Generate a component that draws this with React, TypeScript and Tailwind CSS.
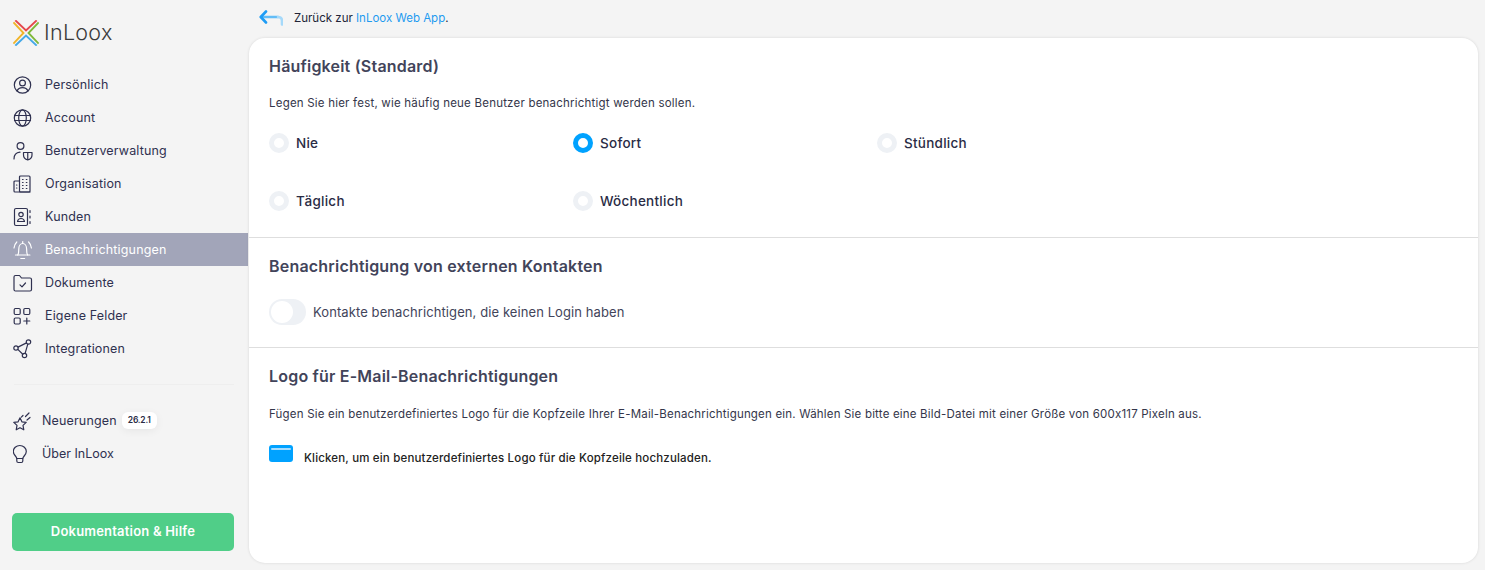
import React from "react";

const S = (p: { children: React.ReactNode }) => (
  <svg viewBox="0 0 20 20" fill="none" stroke="currentColor" strokeWidth="1.2" strokeLinecap="round" strokeLinejoin="round" className="w-[20px] h-[20px] shrink-0">
    {p.children}
  </svg>
);

const icons: Record<string, React.ReactNode> = {
  user: (<><circle cx="9.5" cy="10" r="8.2" /><circle cx="9.5" cy="8" r="2.9" /><path d="M4.1 16c.9-2.4 3-3.3 5.4-3.3s4.5.9 5.4 3.3" /></>),
  globe: (<><circle cx="9.5" cy="10" r="8.2" /><ellipse cx="9.5" cy="10" rx="3.8" ry="8.2" /><path d="M1.5 7.5h16M1.5 12.5h16" /></>),
  users: (<><circle cx="7.5" cy="5" r="3.4" /><path d="M1 18c0-4 2.5-6.500 6-6.800" /><path d="M10.500 11.500h8.500v2.500c0 2.500-2 4.300-4.250 4.800-2.250-.5-4.250-2.300-4.250-4.800z" /><path d="M14.750 11.500v7" /></>),
  org: (<><rect x="6.500" y="2" width="10.500" height="16" rx="1" /><path d="M6.500 7H2a1 1 0 0 0-1 1v9a1 1 0 0 0 1 1h15" /><path d="M9.500 5.500h.6M13.300 5.500h.6M9.500 8.500h.6M13.300 8.500h.6M9.500 11.500h.6M13.300 11.500h.6M3.500 11h.4M3.500 14h.4M9.500 14.500h.6M13.300 14.500h.6" /></>),
  contact: (<><rect x="1.500" y="1.500" width="13" height="17" rx="1.500" /><circle cx="8" cy="7.500" r="2.200" /><path d="M4.500 14.500c.3-2 1.700-3 3.500-3s3.200 1 3.500 3z" /><path d="M17 3.500v2M17 9v2M17 14.500v2" /></>),
  bell: (<><path d="M4.800 15c.9-1.500 1-3 1-6 0-3 1.700-5.500 3.900-5.500s3.900 2.500 3.900 5.500c0 3 .1 4.500 1 6" /><path d="M2.500 15h14.400" /><path d="M7.800 18.500h3.800" /><path d="M9.700 1.500v2" /><path d="M3.800 2C2.200 3.500 1.300 5.500 1 8M15.600 2c1.600 1.500 2.500 3.500 2.800 6" /></>),
  folder: (<><path d="M1 16.500V4a1.500 1.500 0 0 1 1.500-1.500h4l2 2.500h8.500A1.500 1.500 0 0 1 18.500 6.500v10a1.500 1.500 0 0 1-1.500 1.500H2.500A1.500 1.500 0 0 1 1 16.500z" /><path d="M7 11.800l2 2 3.500-3.800" /></>),
  fields: (<><rect x="1.200" y="2.500" width="6" height="6" rx="1.200" /><rect x="10.800" y="2.500" width="6" height="6" rx="1.200" /><rect x="1.200" y="12" width="6" height="6" rx="1.200" /><path d="M13.800 12v6M10.800 15h6" /></>),
  share: (<><circle cx="3" cy="9" r="2.200" /><circle cx="15.500" cy="3" r="2.200" /><circle cx="11.500" cy="16.500" r="2.200" /><path d="M5 8.100l8.500-4.200M4.800 10.400l5 4.800M14.800 5.100l-2.700 9.300" /></>),
  star: (<><path d="M7 6.800l1.900 4 4.300.6-3.200 3 .8 4.400L7 16.700l-3.800 2.100.8-4.400-3.200-3 4.300-.6z" /><path d="M10 4.500L8.300 6.200M16 2l-3.500 3.500M17 6.500l-3 2.500" /></>),
  bulb: (<g transform="translate(-3.200 0)"><path d="M7 14.500c0-2-3.500-3.500-3.500-7a6.500 6 0 0 1 13 0c0 3.500-3.500 5-3.500 7z" /><path d="M7 14.500v2.500a1.500 1.500 0 0 0 1.500 1.500h3A1.500 1.500 0 0 0 13 17v-2.500" /></g>),
};

const nav = [
  ["user", "Persönlich"],
  ["globe", "Account"],
  ["users", "Benutzerverwaltung"],
  ["org", "Organisation"],
  ["contact", "Kunden"],
  ["bell", "Benachrichtigungen"],
  ["folder", "Dokumente"],
  ["fields", "Eigene Felder"],
  ["share", "Integrationen"],
];

const Radio = ({ label, on }: { label: string; on?: boolean }) => (
  <div className="flex items-center gap-[7px] h-[20px]">
    <span className={on ? "w-[20px] h-[20px] rounded-full border-[5px] border-[#00a2ff] bg-white" : "w-[20px] h-[20px] rounded-full border-[5px] border-[#eef1f5] bg-white"} />
    <span className="text-[13.5px] tracking-[0.25px] text-[#2a2c45] font-[450]">{label}</span>
  </div>
);

const H = ({ children }: { children: React.ReactNode }) => (
  <h2 className="text-[16px] leading-[24px] font-semibold tracking-[0.2px] text-[#42445a]">{children}</h2>
);

export default function App() {
  return (
    <div className="flex w-[1485px] h-[570px] overflow-hidden bg-[#f4f4f4] font-['Inter',sans-serif]">
      <aside className="w-[248px] shrink-0 flex flex-col">
        <div className="h-[68px] flex items-start pl-[13px] pt-[20px] gap-[5px]">
          <svg viewBox="0 0 26 26" className="w-[26px] h-[26px] shrink-0" fill="none" strokeWidth="1.9" strokeLinecap="square">
            <path d="M3 1l10 9.500L23 1" stroke="#e5484d" />
            <path d="M1 3l9.500 10L1 23" stroke="#f0b429" />
            <path d="M3 25l10-9.500L23 25" stroke="#45a9e8" />
            <path d="M25 3l-9.500 10L25 23" stroke="#7fb83a" />
          </svg>
          <span className="text-[21.5px] leading-[25px] font-light text-[#3c3c3c] tracking-[0.3px]">InLoox</span>
        </div>
        <nav className="flex flex-col">
          {nav.map(([ic, label]) => {
            const active = label === "Benachrichtigungen";
            return (
              <div key={label} className={active ? "h-[33px] flex items-center pl-[13px] gap-[12px] bg-[#a2a5b9] text-[#ffffff]" : "h-[33px] flex items-center pl-[13px] gap-[12px] text-[#2f3150]"}>
                <S>{icons[ic]}</S>
                <span className="pt-[2px] text-[12.5px] tracking-[0.15px]">{label}</span>
              </div>
            );
          })}
        </nav>
        <div className="mx-[14px] mt-[19px] h-px bg-[#eeeeee]" />
        <div className="flex flex-col mt-[19px]">
          <div className="h-[33px] flex items-center pl-[13px] gap-[9px] text-[#2f3150]">
            <S>{icons.star}</S>
            <span className="pt-[2px] text-[12.5px] tracking-[0.15px]">Neuerungen</span>
            <span className="ml-[-4px] h-[17px] w-[35px] justify-center flex items-center bg-white rounded-[6px] text-[8.5px] font-semibold tracking-[-0.2px] text-[#2a2c45] shadow-[0_2px_8px_rgba(0,0,0,0.06)]">26.2.1</span>
          </div>
          <div className="h-[33px] flex items-center pl-[13px] gap-[9px] text-[#2f3150]">
            <S>{icons.bulb}</S>
            <span className="pt-[2px] text-[12.5px] tracking-[0px]">Über InLoox</span>
          </div>
        </div>
        <button className="mx-[12px] mt-[43px] h-[38px] w-[222px] rounded-[5px] bg-[#50ce88] text-white text-[13px] font-semibold tracking-[0.2px]">Dokumentation &amp; Hilfe</button>
      </aside>

      <main className="flex-1 flex flex-col pl-px pr-[7px] pb-[7px] min-w-0">
        <div className="h-[38px] flex items-center gap-[11px] pl-[10px] text-[11.5px] text-[#222437]">
          <svg viewBox="0 0 24 18" className="w-[24px] h-[18px] shrink-0" fill="none" strokeWidth="2.6" strokeLinecap="round" strokeLinejoin="round">
            <path d="M19 7H2" stroke="#62bdf7" />
            <path d="M19 7c3 0 4 2 4 4v3.500" stroke="#a5d9fa" />
            <path d="M7 1.500L1.800 7 7 12.500" stroke="#1e9cf5" />
          </svg>
          <span className="tracking-[0px]">Zurück zur <span className="text-[#1f9bf0]">InLoox Web App</span>.</span>
        </div>
        <div className="flex-1 bg-white rounded-[16px] shadow-[0_0_3px_rgba(0,0,0,0.12)] flex flex-col">
          <section className="h-[200px] px-[20px] pt-[16px] border-b border-[#dedede]">
            <H>Häufigkeit (Standard)</H>
            <p className="mt-[17px] text-[11.5px] leading-[16px] tracking-[0.21px] text-[#34364a]">Legen Sie hier fest, wie häufig neue Benutzer benachrichtigt werden sollen.</p>
            <div className="mt-[22px] grid grid-cols-[304px_304px_304px] gap-y-[38px]">
              <Radio label="Nie" />
              <Radio label="Sofort" on />
              <Radio label="Stündlich" />
              <Radio label="Täglich" />
              <Radio label="Wöchentlich" />
            </div>
          </section>
          <section className="h-[110px] px-[20px] pt-[16px] border-b border-[#dedede]">
            <H>Benachrichtigung von externen Kontakten</H>
            <div className="mt-[21px] flex items-center gap-[7px]">
              <span className="w-[37px] h-[26px] rounded-full bg-[#eef1f5] p-[2px] flex">
                <span className="w-[22px] h-[22px] rounded-full bg-white" />
              </span>
              <span className="pt-[1px] text-[13px] tracking-[0.09px] text-[#42445a]">Kontakte benachrichtigen, die keinen Login haben</span>
            </div>
          </section>
          <section className="flex-1 px-[20px] pt-[16px]">
            <H>Logo für E-Mail-Benachrichtigungen</H>
            <p className="mt-[18px] text-[11.5px] leading-[16px] tracking-[0.19px] text-[#34364a]">Fügen Sie ein benutzerdefiniertes Logo für die Kopfzeile Ihrer E-Mail-Benachrichtigungen ein. Wählen Sie bitte eine Bild-Datei mit einer Größe von 600x117 Pixeln aus.</p>
            <div className="mt-[23px] flex items-start gap-[11px]">
              <span className="w-[24px] h-[17px] rounded-[3px] bg-[#00a2ff] flex flex-col px-[2px] pt-[3px]">
                <span className="h-[2px] bg-[#a5dcff] rounded-full" />
              </span>
              <span className="mt-[5px] text-[11.5px] leading-[16px] tracking-[0.17px] text-[#222222] font-[450]">Klicken, um ein benutzerdefiniertes Logo für die Kopfzeile hochzuladen.</span>
            </div>
          </section>
        </div>
      </main>
    </div>
  );
}
